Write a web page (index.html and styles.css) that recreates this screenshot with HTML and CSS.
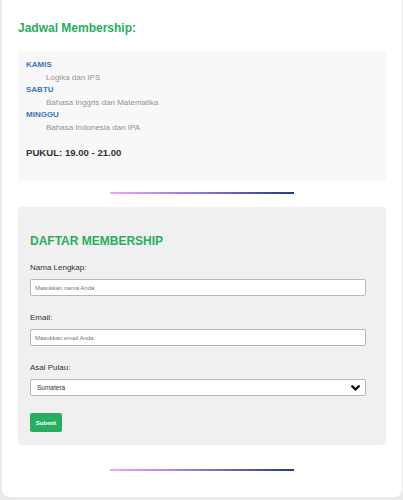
FILE: index.html
```html
<!DOCTYPE html>
<html lang="id">
<head>
<meta charset="utf-8">
<link rel="stylesheet" href="styles.css">
</head>
<body>
<div class="container">
  <h2 class="title">Jadwal Membership:</h2>
  <div class="schedule">
    <div class="day">KAMIS</div>
    <div class="subject">Logika dan IPS</div>
    <div class="day">SABTU</div>
    <div class="subject">Bahasa Inggris dan Matematika</div>
    <div class="day">MINGGU</div>
    <div class="subject">Bahasa Indonesia dan IPA</div>
    <div class="time">PUKUL: 19.00 - 21.00</div>
  </div>
  <div class="divider"></div>
  <form class="form">
    <h2 class="form-title">DAFTAR MEMBERSHIP</h2>
    <label class="label">Nama Lengkap:</label>
    <input class="field" type="text" placeholder="Masukkan nama Anda">
    <label class="label">Email:</label>
    <input class="field" type="email" placeholder="Masukkan email Anda">
    <label class="label">Asal Pulau:</label>
    <div class="select-wrap">
      <select class="field select">
        <option>Sumatera</option>
      </select>
      <svg class="chevron" width="9" height="6" viewBox="0 0 9 6"><path d="M1.2 1.2 L4.5 4.5 L7.8 1.2" fill="none" stroke="#000" stroke-width="2.2" stroke-linecap="round" stroke-linejoin="round"/></svg>
    </div>
    <button class="submit" type="button">Submit</button>
  </form>
  <div class="divider bottom"></div>
</div>
</body>
</html>
```
FILE: styles.css
```css
* { box-sizing: border-box; }
html, body { margin: 0; padding: 0; }
body {
  background: #ebebeb;
  font-family: "Liberation Sans", Arial, sans-serif;
  height: 500px;
  overflow: hidden;
}
.container {
  margin-left: 2px;
  width: 400px;
  height: 497px;
  background: #fff;
  border-radius: 0 0 8px 8px;
  padding: 21px 16px 0 16px;
}
.title {
  margin: 0 0 15px 0;
  font-size: 12px;
  font-weight: bold;
  color: #27ae60;
  line-height: 15px;
}
.schedule {
  width: 368px;
  height: 130px;
  background: #f8f8f8;
  border-radius: 4px;
  padding: 8px 8px;
}
.day {
  font-size: 8px;
  font-weight: bold;
  color: #4274bb;
  line-height: 10px;
  margin-top: 1px;
}
.subject {
  font-size: 8px;
  color: #939393;
  line-height: 11px;
  padding-left: 20px;
  margin-top: 2px;
  margin-bottom: 2px;
}
.time {
  font-size: 9.6px;
  font-weight: bold;
  color: #333;
  margin-top: 14px;
  line-height: 12px;
}
.divider {
  width: 184px;
  height: 2px;
  margin: 11px 0 0 92px;
  background: linear-gradient(to right, #f0a6f8, #9a7ccc 45%, #1e3a8a);
}
.form {
  margin: 13px 0 0 0;
  width: 368px;
  height: 238px;
  background: #f0f0f0;
  border-radius: 4px;
  padding: 26px 20px 0 12px;
  display: flex;
  flex-direction: column;
  align-items: flex-start;
}
.form-title {
  margin: 0 0 14px 0;
  font-size: 12px;
  font-weight: bold;
  color: #27ae60;
  line-height: 16px;
}
.label {
  font-size: 8px;
  color: #333;
  line-height: 10px;
  margin-bottom: 6px;
}
.field {
  width: 336px;
  height: 17px;
  border: 1px solid #b8b8b8;
  border-radius: 2px;
  background: #fff;
  font-family: "Liberation Sans", Arial, sans-serif;
  font-size: 6px;
  padding: 0 4px;
  margin: 0 0 17px 0;
  outline: none;
}
.field::placeholder { color: #777; }
.select-wrap {
  position: relative;
  width: 336px;
  margin-bottom: 17px;
}
.select {
  -webkit-appearance: none;
  appearance: none;
  margin: 0;
  padding: 0 6px;
  font-size: 6.5px;
  color: #333;
  display: block;
}
.chevron {
  position: absolute;
  right: 6px;
  top: 6px;
}
.submit {
  width: 32px;
  height: 19px;
  background: #27ae60;
  color: #fff;
  border: none;
  border-radius: 2px;
  font-family: "Liberation Sans", Arial, sans-serif;
  font-size: 6px;
  font-weight: bold;
  padding: 0;
}
.divider.bottom {
  margin-top: 24px;
}
```
